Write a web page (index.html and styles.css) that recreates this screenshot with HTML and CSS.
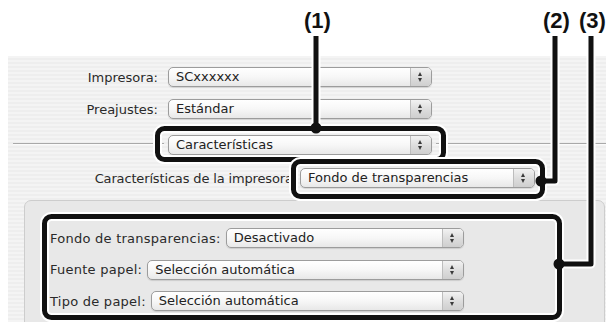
FILE: index.html
```html
<!DOCTYPE html>
<html lang="es">
<head>
    <meta charset="UTF-8">
    <meta name="viewport" content="width=device-width, initial-scale=1.0">
    <title>Características de la impresora</title>
    <link rel="stylesheet" href="styles.css">
</head>
<body>
<div class="figure">

    <!-- Callout numbers -->
    <span class="marker m1">(1)</span>
    <span class="marker m2">(2)</span>
    <span class="marker m3">(3)</span>

    <!-- Print dialog sheet -->
    <div class="sheet">
        <div class="row">
            <span class="label">Impresora:</span>
            <div class="popup wide"><span class="value">SCxxxxxx</span><span class="stepper"></span></div>
        </div>
        <div class="row">
            <span class="label">Preajustes:</span>
            <div class="popup wide"><span class="value">Estándar</span><span class="stepper"></span></div>
        </div>
        <div class="row divider">
            <span class="rule left"></span>
            <div class="popup wide"><span class="value">Características</span><span class="stepper"></span></div>
            <span class="rule right"></span>
        </div>
        <div class="row">
            <span class="label long">Características de la impresora:</span>
            <div class="popup mid"><span class="value">Fondo de transparencias</span><span class="stepper"></span></div>
        </div>

        <!-- Grouped options -->
        <div class="group">
            <div class="option">
                <span class="opt-label">Fondo de transparencias:</span>
                <div class="popup fill"><span class="value">Desactivado</span><span class="stepper"></span></div>
            </div>
            <div class="option">
                <span class="opt-label">Fuente papel:</span>
                <div class="popup fill"><span class="value">Selección automática</span><span class="stepper"></span></div>
            </div>
            <div class="option">
                <span class="opt-label">Tipo de papel:</span>
                <div class="popup fill"><span class="value">Selección automática</span><span class="stepper"></span></div>
            </div>
        </div>
    </div>

    <!-- Callout frames and leader lines -->
    <svg class="callouts" width="606" height="322" viewBox="0 0 606 322">
        <g fill="none" stroke-linejoin="round">
            <path d="M316 36 V128" stroke="#fff" stroke-width="9"/>
            <rect x="157.5" y="128.5" width="286" height="31" rx="7" stroke="#fff" stroke-width="9"/>
            <path d="M316 36 V128" stroke="#111" stroke-width="5"/>
            <rect x="157.5" y="128.5" width="286" height="31" rx="7" stroke="#111" stroke-width="5"/>
            <circle cx="316" cy="128" r="5.5" fill="#111" stroke="none"/>

            <path d="M541 181 H555 V36" stroke="#fff" stroke-width="9"/>
            <rect x="293.5" y="161.5" width="249" height="35" rx="7" stroke="#fff" stroke-width="9"/>
            <path d="M541 181 H555 V36" stroke="#111" stroke-width="5"/>
            <rect x="293.5" y="161.5" width="249" height="35" rx="7" stroke="#111" stroke-width="5"/>
            <circle cx="541" cy="181" r="5.5" fill="#111" stroke="none"/>

            <path d="M559 264 H591 V36" stroke="#fff" stroke-width="9"/>
            <rect x="44.5" y="216.5" width="515" height="101" rx="7" stroke="#fff" stroke-width="9"/>
            <path d="M559 264 H591 V36" stroke="#111" stroke-width="5"/>
            <rect x="44.5" y="216.5" width="515" height="101" rx="7" stroke="#111" stroke-width="5"/>
            <circle cx="559" cy="264" r="5.5" fill="#111" stroke="none"/>
        </g>
    </svg>
</div>
</body>
</html>
```

FILE: styles.css
```css
/* Page */
body {
    margin: 0;
    background-color: white;
    font-family: "DejaVu Sans", sans-serif;
    font-size: 13px;
    color: #2a2a2a;
}

.figure {
    position: relative;
    width: 606px;
    height: 322px;
    overflow: hidden;
}

/* Callout numbers */
.marker {
    position: absolute;
    top: 10px;
    font-family: "Liberation Sans", Arial, sans-serif;
    font-weight: bold;
    font-size: 22px;
    line-height: 22px;
    color: #111;
}

.m1 { left: 304px; }
.m2 { left: 543px; }
.m3 { left: 579px; }

.callouts {
    position: absolute;
    left: 0;
    top: 0;
}

/* Dialog sheet with pinstripes */
.sheet {
    margin: 56px 0 0 8px;
    height: 266px;
    padding-top: 11px;
    box-sizing: border-box;
    background: repeating-linear-gradient(#f4f4f4 0 2px, #eeeeee 2px 4px);
}

.row {
    display: flex;
    align-items: center;
    height: 20px;
    margin-bottom: 12px;
}

.row.divider {
    margin-top: 16px;
    margin-bottom: 13px;
}

.label {
    width: 160px;
    padding-right: 10px;
    box-sizing: border-box;
    text-align: right;
    white-space: nowrap;
}

.label.long {
    width: 292px;
    padding-right: 3px;
    letter-spacing: -0.15px;
}

.rule {
    height: 1px;
    background-color: #a9a9a9;
    border-bottom: 1px solid #fbfbfb;
    margin-top: -2px;
}

.rule.left {
    width: 151px;
    margin-left: 5px;
    margin-right: 4px;
}

.rule.right {
    flex: 1;
    margin-left: 4px;
}

/* Pop-up buttons */
.popup {
    display: flex;
    height: 20px;
    box-sizing: border-box;
    border: 1px solid #9c9c9c;
    border-radius: 5px;
    background: linear-gradient(#ffffff, #f7f7f7 50%, #e8e8e8);
    box-shadow: 0 1px 1px rgba(0, 0, 0, 0.12);
    overflow: hidden;
}

.popup.wide { width: 264px; }
.popup.mid { width: 235px; }
.popup.fill { flex: 1; }

.value {
    flex: 1;
    padding-left: 7px;
    line-height: 18px;
    white-space: nowrap;
    color: #222;
}

.stepper {
    position: relative;
    width: 20px;
    border-left: 1px solid #bdbdbd;
    background: linear-gradient(#f2f2f2, #dcdcdc 55%, #cfcfcf);
}

.stepper::before,
.stepper::after {
    content: "";
    position: absolute;
    left: 7px;
    border-left: 2.5px solid transparent;
    border-right: 2.5px solid transparent;
}

.stepper::before {
    top: 4px;
    border-bottom: 4px solid #3a3a3a;
}

.stepper::after {
    top: 10px;
    border-top: 4px solid #3a3a3a;
}

/* Grouped options box */
.group {
    margin: 11px 1px 0 16px;
    height: 140px;
    padding: 27px 0 0 25px;
    box-sizing: border-box;
    background-color: #e8e8e8;
    border: 1px solid #cdcdcd;
    border-radius: 7px;
}

.option {
    display: flex;
    align-items: center;
    gap: 5px;
    width: 414px;
    height: 20px;
    margin-bottom: 11.5px;
}

.opt-label {
    white-space: nowrap;
    letter-spacing: 0.25px;
}
```
